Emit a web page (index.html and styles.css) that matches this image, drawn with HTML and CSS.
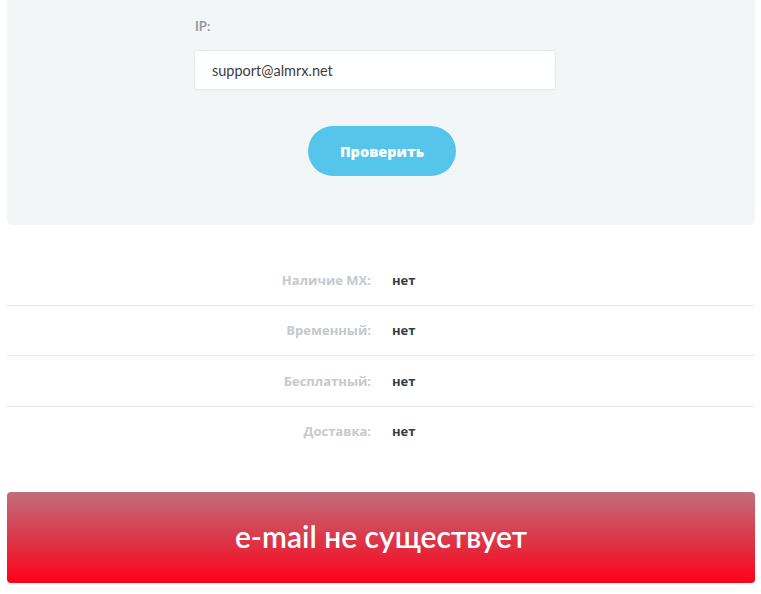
FILE: index.html
```html
<!DOCTYPE html>
<html lang="ru">
<head>
<meta charset="utf-8">
<title>Проверка e-mail</title>
<link rel="stylesheet" href="styles.css">
</head>
<body>
<div class="page">
  <section class="panel">
    <form class="check-form">
      <label class="field-label" for="ip">IP:</label>
      <input class="field-input" id="ip" type="text" value="support@almrx.net">
      <div class="actions">
        <button class="btn-check" type="button">Проверить</button>
      </div>
    </form>
  </section>

  <div class="results">
    <div class="row"><div class="key">Наличие MX:</div><div class="val">нет</div></div>
    <div class="row"><div class="key">Временный:</div><div class="val">нет</div></div>
    <div class="row"><div class="key">Бесплатный:</div><div class="val">нет</div></div>
    <div class="row"><div class="key">Доставка:</div><div class="val">нет</div></div>
  </div>

  <div class="verdict">e-mail не существует</div>
</div>
</body>
</html>
```

FILE: styles.css
```css
html, body {
  margin: 0;
  padding: 0;
  background: #ffffff;
}
body {
  font-family: Lato, "Open Sans", sans-serif;
}
.page {
  margin: 0 6px 0 7px;
}
.panel {
  background: #f3f6f7;
  border-radius: 0 0 5px 5px;
  padding: 18px 0 49px;
}
.check-form {
  display: flex;
  flex-direction: column;
}
.field-label {
  font-size: 13px;
  font-weight: 700;
  color: #9a9a9a;
  line-height: 16px;
  margin: 0 0 16px 188px;
}
.field-input {
  box-sizing: border-box;
  height: 40px;
  width: 362px;
  margin-left: 187px;
  border: 1px solid #e6e9eb;
  border-radius: 3px;
  background: #fff;
  padding: 0 0 0 17px;
  font-family: Lato, sans-serif;
  font-size: 14.5px;
  color: #3d3d3d;
  outline: none;
}
.actions {
  display: flex;
  justify-content: center;
  margin-top: 36px;
  padding-left: 2px;
}
.btn-check {
  width: 148px;
  height: 50px;
  border: 0;
  border-radius: 25px;
  background: #56c5ec;
  color: #fff;
  font-family: "Open Sans", sans-serif;
  font-weight: 800;
  font-size: 14.5px;
  cursor: pointer;
}
.results {
  margin-top: 30px;
}
.row {
  display: grid;
  grid-template-columns: 1fr 1fr;
  height: 49.5px;
  align-items: center;
  border-bottom: 1px solid #ebebeb;
  font-family: "Open Sans", sans-serif;
  font-weight: 700;
  font-size: 13px;
}
.row:last-child {
  border-bottom: 0;
}
.key {
  text-align: right;
  padding-right: 10px;
  color: #c5c9cd;
}
.val {
  padding-left: 11px;
  color: #343d46;
}
.verdict {
  margin-top: 35.5px;
  height: 91px;
  border-radius: 4px;
  background: linear-gradient(to bottom, #c06e7a 0%, #de3346 55%, #ff0019 100%);
  color: #fff;
  display: flex;
  align-items: center;
  justify-content: center;
  font-family: Lato, sans-serif;
  font-size: 30px;
  font-weight: 600;
  padding-bottom: 2px;
  box-sizing: border-box;
}
```
